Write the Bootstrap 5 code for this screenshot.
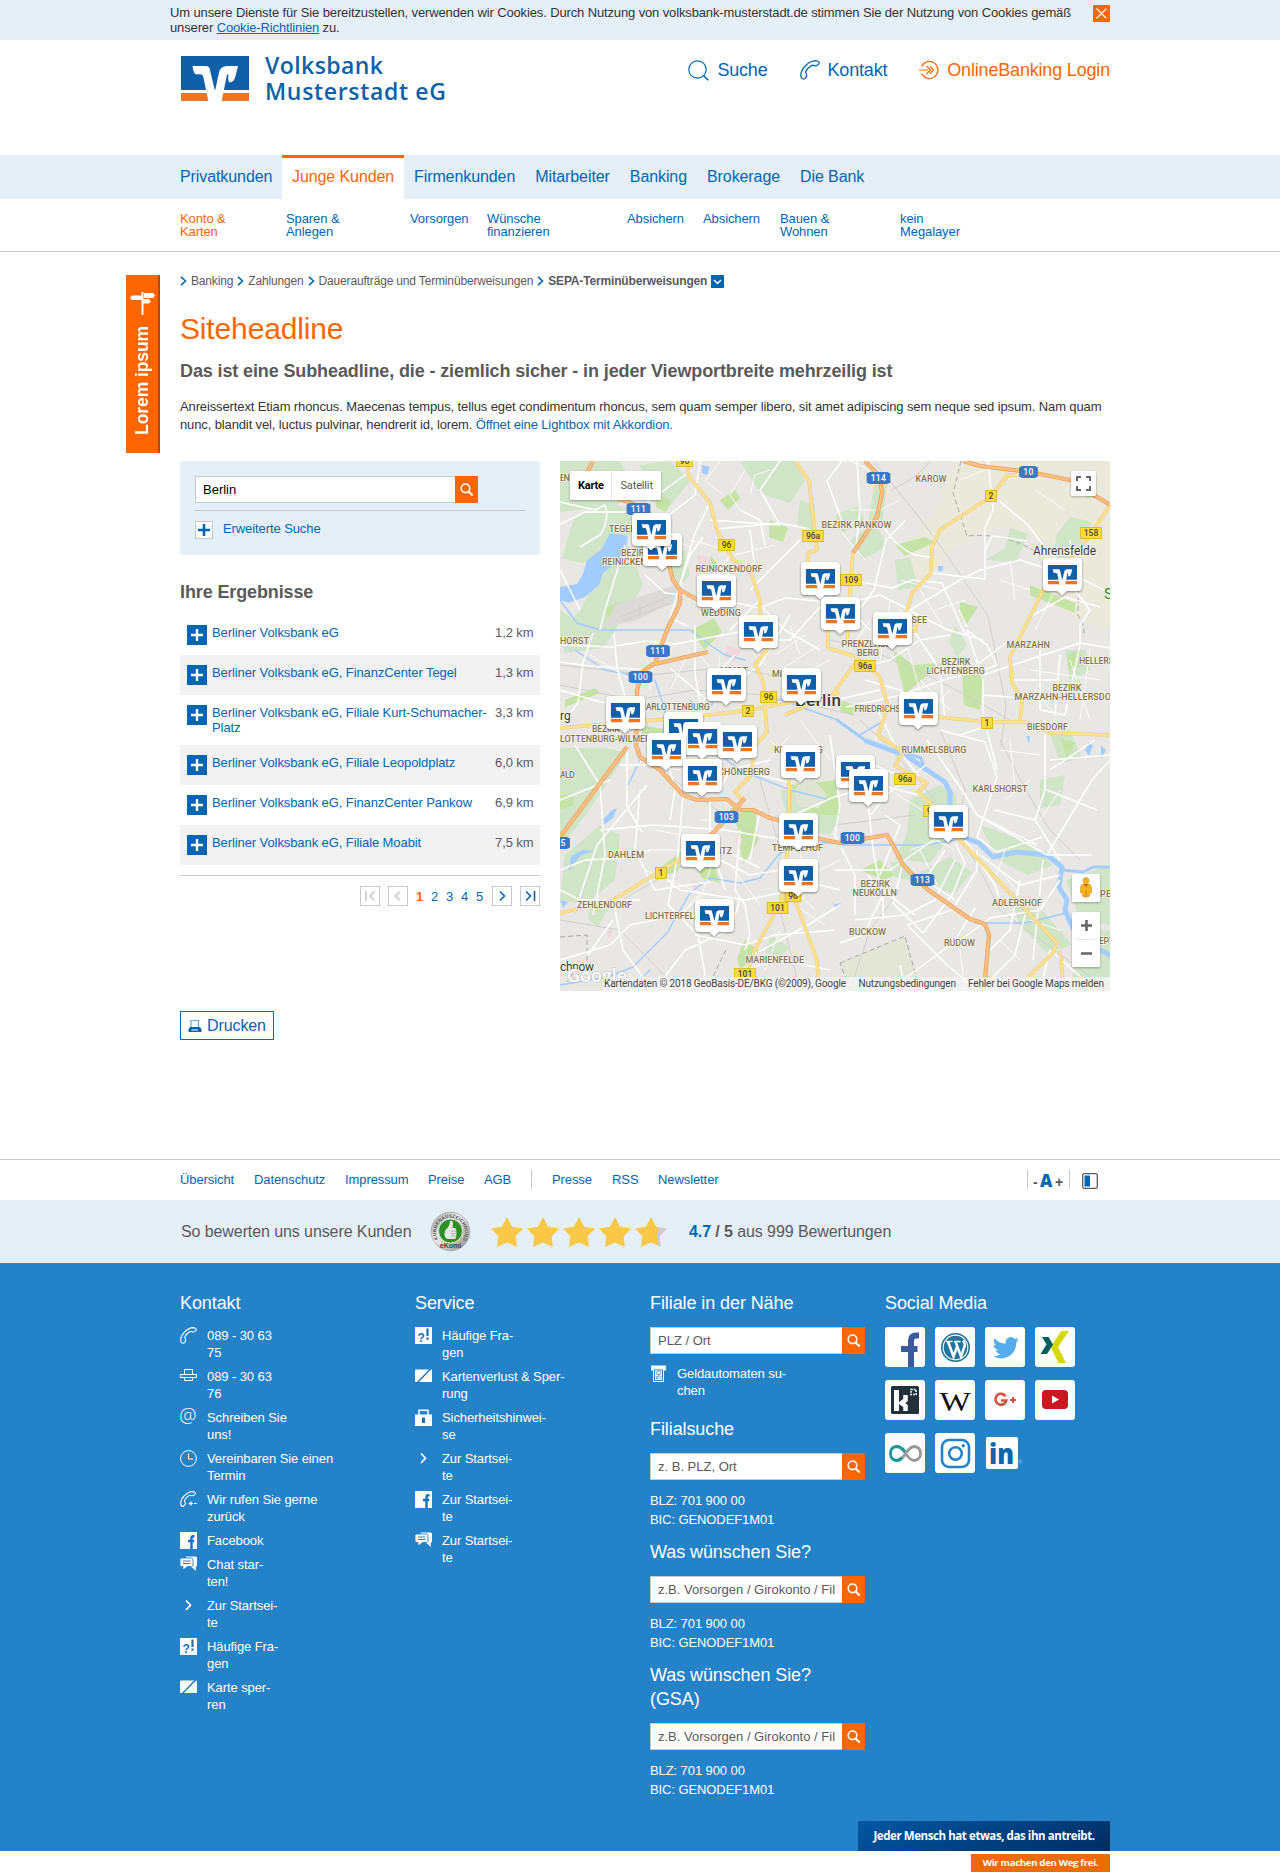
<!DOCTYPE html>
<html lang="de">
<head>
<meta charset="utf-8">
<meta name="viewport" content="width=device-width, initial-scale=1">
<title>Volksbank Musterstadt eG</title>
<link href="https://cdn.jsdelivr.net/npm/bootstrap@5.3.0/dist/css/bootstrap.min.css" rel="stylesheet">
<style>
:root{--vb:#0066b3;--or:#f60;--pale:#e4eff7;--line:#c8c8c8}
body{font-family:"Liberation Sans",Arial,sans-serif;font-size:13px;line-height:15px;letter-spacing:-.09px;color:#333;background:#fff;overflow-x:hidden}
a{color:var(--vb);text-decoration:none}
svg{display:block;flex:none;letter-spacing:0}
.wrap{width:940px;margin:0 auto;padding-left:10px}
.cookie{background:var(--pale);height:40px;padding-top:5px}
.cookie p{white-space:nowrap;letter-spacing:-.13px}
.close-x{width:17px;height:17px;background:var(--or)}
.site-head{height:115px}
.logo{margin:15px 0 0 1px}
.tools{font-size:18px;line-height:24px;padding-top:18px;letter-spacing:-.18px}
.mainnav{background:var(--pale);height:44px}
.mainnav .nav-link{font-size:16px;line-height:44px;padding:0 10px;color:var(--vb);white-space:nowrap}
.mainnav .nav-link.active{background:#fff;color:var(--or);border-top:3px solid var(--or);line-height:38px;height:44px;width:122px}
.subnav{height:53px;border-bottom:1px solid var(--line);padding-top:13px;line-height:13px}
.crumbs{font-size:12px;line-height:18px;color:#5a5a5a;padding-top:20px;letter-spacing:-.16px}
.headline{font-size:30px;line-height:36px;color:var(--or);margin:21px 0 0;font-weight:400;letter-spacing:-.15px}
.subline{font-size:18px;line-height:24px;color:#5a5a5a;font-weight:700;margin:12px 0 0;letter-spacing:-.12px}
.intro{line-height:18px;margin:15px 0 0;white-space:nowrap;letter-spacing:-.123px}
.sidetab{left:126px;top:275px;width:34px;height:178px;background:var(--or);border-right:2px solid #b94a00}
.sidetab span{writing-mode:vertical-rl;transform:rotate(180deg);color:#fff;font-weight:700;font-size:17.5px;line-height:20px}
.left-col{width:360px}
.searchbox{background:var(--pale);height:94px;padding:15px}
.field{height:27px}
.field .form-control{font-family:inherit;font-size:13px;line-height:15px;height:27px;border:1px solid var(--line);border-right:0;border-radius:0;padding:0 0 0 7px;color:#000;box-shadow:none;background:#fff}
.field .form-control::placeholder{color:#5a5a5a;opacity:1}
.field .btn{width:23px;height:27px;border-radius:0;background:var(--or);padding:0;border:0;flex:none}
.more{border-top:1px solid var(--line);margin-top:7px;padding-top:10px}
.boxed{width:18px;height:18px;border:1px solid var(--line);background:#fff}
.results{margin-top:11px}
.results li{padding:10px 7px;gap:5px;min-height:40px}
.results li:nth-child(even){background:#f2f2f2}
.plus{width:20px;height:20px;background:var(--vb);flex:none}
.km{color:#5a5a5a;width:38px;text-align:right;white-space:nowrap}
.pager{margin-top:10px;border-top:1px solid var(--line);padding-top:10px}
.pg{width:20px;height:20px;border:1px solid var(--line)}
.print{margin-top:20px;width:94px;height:29px;border:1px solid var(--vb);border-radius:0;font-size:16px;color:var(--vb);padding:0 0 0 7px;line-height:27px;gap:5px;letter-spacing:-.1px}
.map{width:550px;height:530px}
.map text{font-family:Roboto,sans-serif}
.metabar{margin-top:119px;border-top:1px solid var(--line);height:41px}
.metabar a{position:static}
.metabar .wrap{height:39px}
.vr-l{width:1px;height:19px;background:var(--line)}
.rating{background:var(--pale);height:63px;font-size:16px;color:#5a5a5a}
.foot{background:#2482c9;height:588px;color:#fff}
.foot h3{font-size:18px;line-height:24px;margin:0 0 12px;font-weight:400;white-space:nowrap}
.foot a{color:#fff}
.fcol{width:235px}
.flist li{line-height:17px;margin-bottom:7px;gap:10px}
.flist svg,.flist .ic{width:17px;height:17px}
.blz{line-height:19px;margin:11px 0}
.fsearch{width:215px}
.fsearch .form-control{padding-left:7px}
.social{display:grid;grid-template-columns:repeat(4,40px);gap:13px 10px}
.tile{width:40px;height:40px;background:#fff;border-radius:3px}
.slogan{width:252px;height:30px;background:linear-gradient(160deg,#0058a5,#002c60);font:700 11.5px/30px "Open Sans",sans-serif;letter-spacing:-.42px;text-align:center;color:#fff;white-space:nowrap}
.slogan2{width:139px;height:18px;margin-top:3px;background:#ee6a05;font:700 9.6px/18px "Open Sans",sans-serif;letter-spacing:-.3px;text-align:center;color:#fff;white-space:nowrap}
</style>
<script src="https://cdn.jsdelivr.net/npm/bootstrap@5.3.0/dist/js/bootstrap.bundle.min.js"></script>
</head>
<body class="position-relative">

<svg width="0" height="0" class="position-absolute" aria-hidden="true">
  <defs>
    <symbol id="vr" viewBox="0 0 68 45">
      <path fill="#fff" d="M0 0h68v45H0z"/>
      <path fill="#0f5fa9" d="M0 0h68v34H0z"/>
      <path fill="#ed7423" d="M0 37h68v8H0z"/>
      <path fill="#fff" d="M11.500 10H25.500Q28 10 28.600 12.500L34 35 38 16.500Q39.500 10 46 10H57L54.500 20Q53 26.500 48.500 26.500 46.500 25 47.500 18.500L46 18.500 40.500 46H27.600L22.300 21Q21.700 18.200 19 18.200H14.500Q12.500 17 11.500 10z"/>
    </symbol>
    <symbol id="lens" viewBox="0 0 23 27"><circle cx="10.500" cy="12.300" r="4.300" fill="none" stroke="#fff" stroke-width="1.600"/><path d="M13.500 15.500l4.200 4" stroke="#fff" stroke-width="2.200"/></symbol>
    <symbol id="phone" viewBox="0 0 20 20"><path fill="none" stroke="currentColor" stroke-width="1.300" stroke-linejoin="round" d="M.8 15.500C.8 9 8.500 1 15.500.7c1.300 0 3.500 1 3.700 2.200.1.900-.8 1.500-1.700 2.200-1 .8-1.900 1.200-3.300.5-1-.5-1.600-.7-2.800 0C9 7 6.700 9.500 5.800 11.400c-.5 1.100-.1 1.700.5 2.500.9 1.200.7 2-.1 3.100-.8 1-1.400 2.200-2.400 2.200C2 19.200.8 17.200.8 15.500z"/></symbol>
    <symbol id="fbox" viewBox="0 0 17 17"><path fill="#fff" d="M0 0h17v17H0z"/><path d="M14.500 4.200h-1.300q-1.700 0-1.700 1.800V17M8 9h6.200" fill="none" stroke="#1670bd" stroke-width="2.400"/></symbol>
    <symbol id="chat" viewBox="0 0 17 17"><path fill="#fff" d="M5.500.5h10q1.500 0 1.500 1.500v7q0 1.500-1.200 1.700V15l-3-3H12z"/><path fill="#fff" stroke="#2482c9" stroke-width=".9" d="M1.600 2h10q1.400 0 1.400 1.500V9q0 1.500-1.400 1.500H7.500L3 14v-3.500H1.600Q0 10.500 0 9V3.500Q0 2 1.600 2z"/><path stroke="#2482c9" d="M3 5h7.500M3 7.500h7.500"/></symbol>
    <symbol id="chev" viewBox="0 0 17 17"><path d="M6 3.500l4.500 4.700L6 13" fill="none" stroke="#fff" stroke-width="1.700"/></symbol>
    <symbol id="faq" viewBox="0 0 17 17"><path fill="#fff" d="M0 0h17v17H0z"/><text x="2.500" y="15" font-family="Liberation Sans" font-weight="700" font-size="12" fill="#1670bd">?</text><path stroke="#1670bd" stroke-width="2.200" d="M12.500 1.500v7.500M12.500 10.500v2.300"/></symbol>
    <symbol id="ccard" viewBox="0 0 17 17"><rect y="1.500" width="17" height="12.500" rx="1" fill="#fff"/><path d="M2 15L15.500 1" stroke="#1670bd" stroke-width="1.300"/></symbol>
    <symbol id="cr" viewBox="0 0 7 10"><path d="M1 .8l4.500 4.200L1 9.200" fill="none" stroke="#0066b3" stroke-width="1.600"/></symbol>
    <symbol id="star" viewBox="0 0 32 30"><path d="M16 0L21.200 9.800 32 11.500 24.600 19.400 26 30 16 25.500 6 30 7.400 19.400 0 11.500 10.800 9.800z"/></symbol>
    <linearGradient id="part"><stop offset=".72" stop-color="#f9c846"/><stop offset=".72" stop-color="#ccc"/></linearGradient>
  </defs>
</svg>

<div class="cookie">
  <div class="wrap ps-0 d-flex justify-content-between">
    <p class="m-0">Um unsere Dienste für Sie bereitzustellen, verwenden wir Cookies. Durch Nutzung von volksbank-musterstadt.de stimmen Sie der Nutzung von Cookies gemäß<br>unserer <a href="#" class="text-decoration-underline">Cookie-Richtlinien</a> zu.</p>
    <a href="#" class="close-x" aria-label="Schließen"><svg width="17" height="17"><path d="M3.500 3.500l10 10M13.500 3.500l-10 10" stroke="#fff" stroke-width="1.200"/></svg></a>
  </div>
</div>

<header class="wrap site-head d-flex justify-content-between align-items-start">
  <a href="#" class="logo"><svg width="270" height="56"><use href="#vr" y="1" width="68" height="45"/><g font-family="Open Sans, Noto Sans" font-weight="600" font-size="23" fill="#0f5fa9"><text x="84" y="19" textLength="118">Volksbank</text><text x="84" y="45" textLength="181">Musterstadt eG</text></g></svg></a>
  <nav class="tools d-flex">
    <a href="#" class="d-flex align-items-center me-4"><svg width="21" height="21" class="me-2"><circle cx="9.500" cy="9.500" r="8.700" fill="none" stroke="#0066b3" stroke-width="1.200"/><path d="M15.500 15.500l4.700 4.700" stroke="#0066b3" stroke-width="1.600"/></svg>Suche</a>
    <a href="#" class="d-flex align-items-center ms-2"><svg width="20" height="20" style="color:#0066b3" class="me-2"><use href="#phone"/></svg>Kontakt</a>
    <a href="#" class="d-flex align-items-center text-nowrap ms-4" style="color:#f60"><svg width="20" height="20" class="ms-2 me-2" fill="none" stroke="#f60" stroke-width="1.200"><path d="M2.800 6.200a8.500 8.500 0 1 1 0 7.600M0 10h9M7.500 6l4 4-4 4M11 6.500l3.500 3.500-3.500 3.500"/></svg>OnlineBanking Login</a>
  </nav>
</header>

<nav class="mainnav">
  <div class="wrap ps-0 nav flex-nowrap">
    <a class="nav-link" style="width:112px" href="#">Privatkunden</a><a class="nav-link active" href="#">Junge Kunden</a><a class="nav-link" href="#">Firmenkunden</a><a class="nav-link" href="#">Mitarbeiter</a><a class="nav-link" href="#">Banking</a><a class="nav-link" href="#">Brokerage</a><a class="nav-link" href="#">Die Bank</a>
  </div>
</nav>
<nav class="subnav">
  <div class="wrap d-flex">
    <a href="#" style="width:106px;color:#f60">Konto &amp;<br>Karten</a><a href="#" style="width:124px">Sparen &amp;<br>Anlegen</a><a href="#" style="width:77px">Vorsorgen</a><a href="#" style="width:140px">Wünsche<br>finanzieren</a><a href="#" style="width:76px">Absichern</a><a href="#" style="width:77px">Absichern</a><a href="#" style="width:120px">Bauen &amp;<br>Wohnen</a><a href="#">kein<br>Megalayer</a>
  </div>
</nav>

<div class="sidetab position-absolute d-flex flex-column align-items-center">
  <svg width="34" height="46"><path fill="#fff" d="M16.500 17h2v23h-2z"/><path fill="#fff" d="M7 20.500h10v4.500H7l-2-2.200zM19 18h9l2 2.500-2 2.500h-9zM17 24h7l2 2.200-2 2.300h-7z"/></svg>
  <span style="margin-top:5px">Lorem ipsum</span>
</div>

<main class="wrap">
  <div class="crumbs d-flex align-items-center text-nowrap">
    <svg width="7" height="10" class="me-1"><use href="#cr"/></svg>Banking
    <svg width="7" height="10" class="mx-1"><use href="#cr"/></svg>Zahlungen
    <svg width="7" height="10" class="mx-1"><use href="#cr"/></svg>Daueraufträge und Terminüberweisungen
    <svg width="7" height="10" class="mx-1"><use href="#cr"/></svg><b>SEPA-Terminüberweisungen</b>
    <svg width="13" height="13" class="ms-1"><path fill="#0066b3" d="M0 0h13v13H0z"/><path d="M3 5l3.500 3.500L10 5" fill="none" stroke="#fff" stroke-width="1.500"/></svg>
  </div>
  <h1 class="headline">Siteheadline</h1>
  <h2 class="subline">Das ist eine Subheadline, die - ziemlich sicher - in jeder Viewportbreite mehrzeilig ist</h2>
  <p class="intro">Anreissertext Etiam rhoncus. Maecenas tempus, tellus eget condimentum rhoncus, sem quam semper libero, sit amet adipiscing sem neque sed ipsum. Nam quam<br>nunc, blandit vel, luctus pulvinar, hendrerit id, lorem. <a href="#">Öffnet eine Lightbox mit Akkordion.</a></p>

  <div class="d-flex" style="margin-top:27px;gap:20px">
    <section class="left-col">
      <form class="searchbox">
        <div class="input-group field flex-nowrap" style="width:283px"><input class="form-control" value="Berlin" aria-label="Ort"><button type="button" class="btn" aria-label="Suchen"><svg width="23" height="27"><use href="#lens"/></svg></button></div>
        <div class="more d-flex"><span class="boxed"><svg width="16" height="16"><path d="M2 8h12M8 2v12" stroke="#0066b3" stroke-width="2.600"/></svg></span><a href="#" style="margin-left:10px">Erweiterte Suche</a></div>
      </form>
      <h2 class="subline" style="margin-top:25px">Ihre Ergebnisse</h2>
      <ul class="results list-unstyled mb-0" id="results"></ul>
      <div class="pager d-flex justify-content-end align-items-center">
        <a href="#" class="pg"><svg width="18" height="18" fill="none" stroke="#c8c8c8" stroke-width="1.600"><path d="M5 4v10M13.500 4.500L9 9l4.500 4.500"/></svg></a>
        <a href="#" class="pg" style="margin:0 8px"><svg width="18" height="18" fill="none" stroke="#c8c8c8" stroke-width="1.600"><path d="M11 4.500L6.500 9l4.500 4.500"/></svg></a>
        <b style="color:#f60;width:15px">1</b><a href="#" style="width:15px">2</a><a href="#" style="width:15px">3</a><a href="#" style="width:15px">4</a><a href="#" style="width:16px">5</a>
        <a href="#" class="pg"><svg width="18" height="18" fill="none" stroke="#0066b3" stroke-width="1.600"><path d="M7 4.500L11.500 9 7 13.500"/></svg></a>
        <a href="#" class="pg" style="margin-left:8px"><svg width="18" height="18" fill="none" stroke="#0066b3" stroke-width="1.600"><path d="M5 4.500L9.500 9 5 13.500M13.500 4v10"/></svg></a>
      </div>
    </section>

    <svg class="map" id="map" viewBox="560 461 550 530">
      <path fill="#e8e7e4" d="M560 461h550v530H560z"/>
      <path fill="#ebe8dc" d="M955 461h155v170l-50-20-20-70-40-15-50 25-30 40-15-40 30-40z"/>
      <!-- parks and woods -->
      <g fill="#d0e4c8">
        <path d="M560 461h60l15 25-18 20-57 6zM575 515l35-10 40 5 12 20-35 5-20 20-25 8-20-5zM598 575l30-30 15 40-10 18-30 45-38 5-5-22 20-20zM640 465l30-4 20 20-20 25-20-5zM560 610l15 10 5 20h-20zM665 560l20-10 5 25-15 15zM740 461l55 0 10 20-15 22-30-10zM800 500l15 5-3 25-15-5zM560 748l45 0 22 5-40 60-27 35zM565 855l35-30 20 10-5 45-30 25-25-5zM590 900l20 5-12 22-10-8zM850 540l25-18 12 25-25 12zM895 560l15-2 8 28-20 5zM875 480l12 5-5 40-15 5zM985 560l20-12 5-20 18 6-12 28zM1056 535l14-18 22 5-22 40-16 0zM910 800l30-15 15 8 5 30-30 40-35-4 12-25zM890 862l15 0 15 20-25-5zM920 872l30-15 22 15-18 22-22-8zM980 825l45 15 28 25-25 10-30-15zM1040 780l25-5-5 30-20 3zM1050 735l20-5 12 28-22 5zM1066 880l44-15v60l-30-5zM1012 905l30 5 30 35-25 8-25-25zM1080 930h30v61h-40zM780 790l50 0 10 25-10 20-40-8zM770 935l20 12-10 10-15-5zM1065 650l20 0 5 20-20 12zM835 515l25-10 5 18-25 10zM955 625l12 20-10 12-8-15z"/>
      </g>
      <path fill="#e3e6d6" d="M840 963l65-27 15 55h-70z" stroke="#999" stroke-dasharray="5 3" stroke-width=".8"/>
      <g fill="#c5e3a4">
        <path d="M692 630l22-12 8 14-18 18zM640 545l10 5-5 10-8-5zM960 602l18 5-12 18-6-8zM962 675h22l-4 35-16-5zM893 650l20 15 30-2-20 16-18 15zM895 545l30-8 10 5-30 14zM1030 585l45 18v10l-45-18zM735 815l20-8 3 35-15 22zM565 700l30-12 5 5-35 14zM560 795l12 0 2 10-14 5zM662 866l20-15-4 20-14 5zM695 863l20 5 5 15-18-5zM790 785l45-5 5 35-30 0zM640 725l30 5-5 15-20-3zM1080 480l15 10-5 8-12-5zM720 500l15-10 5 8-12 12zM745 940l15 12-20 18-3-12zM860 870l20-10 15 15-12 5zM1068 655l12-5 3 15-15 5zM655 490l16 12-5 10-10-5zM770 520l18 8-5 14-14-5zM603 610l15-8 8 14-15 4zM710 555l8 10-8 10zM1060 738l15 5-8 15zM840 700l15 5-3 10-12-4zM975 985l15-10v16h-15z"/>
      </g>
      <path fill="#f1d8dc" d="M697 555l12 2 4 12-12 2zM727 645l14 5-6 12-10-5zM692 880l8 3-6 10zM605 928l8 2-4 10zM735 838l8 0-4 12z"/>
      <path fill="#dcdad6" d="M615 605l60-20 15 8-55 28-30 5z"/>
      <path fill="#dfe3d3" d="M795 790q5-12 20-8l12 12-8 14-22-2z"/>
      <!-- rails -->
      <g fill="none" stroke="#cfcfcd" stroke-width="1">
        <path d="M873 461q25 30 45 55t70 100l18 90-5 40M560 685q50 10 75 15l60-10 70 5 90 20M560 665l90 10 80-8 60 12M890 491q30-15 40-30M860 720q90 80 140 190l110 81M835 825l80-10M1000 740q30 60 50 90l30 30M940 730l25 60-10 50M760 780l20 70 0 60 20 81M613 905l70-40 60-60M640 700l20 70 100 70M830 640q60 10 180 80M560 920l60 10 60 61M850 990l20-60 30-40"/>
        <path d="M620 617l60-25M622 621l62-22M640 604v15"/>
      </g>
      <path fill="none" stroke="#999" stroke-width=".8" stroke-dasharray="5 3" d="M961 461l-8 32 14 43q40-4 72 18M1078 590v25l6 12v10M560 937l27-2v25l-12 10-8 12M726 950l-20 41"/>
      <!-- water -->
      <g fill="#a3ccff">
        <path d="M610 533l18 3-3 19-22 18-4 12-14 12-16 6-9-3v-13l17-3 6-10 4-14 14-10zM617 808l-4 10-9 7-1-5 8-9zM595 851l-14 4-12 16 2-15 12-6zM702 465l8 2-3 8-5-2zM1026 736l4 0-1 8zM1089 742l4 4-4 10-4-6zM1101 745l5 5-5 9zM560 900l8 2-5 6zM938 566h5v5h-5zM833 905l8-2-4 6z"/>
      </g>
      <g fill="none" stroke="#a3ccff" stroke-linejoin="round" stroke-linecap="round">
        <path stroke-width="5" d="M866 741l41 15 20 14 18 12 5 10v12M965 838l14 5 14 14 23-5 31 3 15 12-3 20 8 13-2 10 5 12 4 8M1100 950l10 5"/>
        <path stroke-width="3" d="M837 720l29 21M903 752l18 6 4 12M1063 870l20 2 10-5 17 0"/>
        <path stroke-width="1.500" d="M560 600l17 23 23 7h90l20 15 15 10 20 5M575 650l30 20 25 5 10 10M655 680l10 30-2 30M690 700l10 10 12-5 2-15M763 700l20 0 20 8 35 12M840 845l45 0 40 0 30-5M633 967l-25 10-48 8M633 967l34-34 23-40 20-15 30 5 20-5 20-25 40-10 20 0M975 923l50 0 42-10M640 760l-12 25M700 740l40 30 50 20 40 10M860 735l20-12M630 990l20-20"/>
      </g>
      <!-- streets -->
      <g fill="none" stroke="#fff" stroke-width="1.500" stroke-linejoin="round">
        <path d="M560 502l35 8 10-5q5 15-5 30l-20 12M560 524l25-12 45 0M637 510l55-40M650 540l15-22 30-23 5-34M710 503l-15 30-25 85 18 8M645 575l20 18 20 2M680 585l10-30 13-18M710 520l70 5-20-35 20-29M717 529l63-6 30 6M730 555l-12 20-20 12M697 600l40 3 23 5 25-10 55 5M760 600l-30 30M760 605l25 25 35 20M770 640l20 0 50-55M600 630l5-20 20-65M560 645l50 2 35-6 30 3 80-15M560 662l30 4 60 4M560 690l40 12 50 5M593 633l-10 30-5 40-15 20M614 633l3 35 10 35M695 625l0 50 8 40M670 668l35 30-10 20M735 655l-20 20M790 615l-30 50-15 10M800 540l-50 50M750 530l5 40M740 510l20 10 5 25M560 570l20 40M857 461l3 50-5 45M880 520q12 25 35 35l15 2M842 461l-15 20 15 40M860 520l-20 8M906 520l-20 20-12 50-15 20M852 580l40 8 20-8 30 3 20 45 5 8M840 605l40-10 30 15 50-30 20-10 40-10 25 8M932 573l25 3 28 3 0-28 7-15 35 5M985 550l0-22 8-18-5-49M998 500l30 25 15 20M1045 548l35 30 30 15M1070 540l5 50 15 20-10 15 0 18M1030 617l35-20 35 10M967 627l-8-17M967 630l20 15 10 20-14 5-40 10-42 15-55 12M983 640l-35-10-40-20M967 630l16 50 0 40M983 675l60-20 37-12 30 5M1040 650l0 60 25 5M1060 655l-5 60M1080 645l-15 70M983 695l65 5M945 720l-5-50-40-60M1012 680l48 0M870 665l20-5 30-20 30-5M830 620l30 0 10 10M865 680l35 10 30 30M880 690l-45 10M875 705l20 40 30 40M1010 640l-40 30"/>
        <path d="M575 745l25 40 5 70-12 60M560 800l50-20M620 765l25 0 35-10M647 785l-50 60-20 60M600 830l55-5 70 5 60 10M640 790l-5 60 20 40 55-8M683 795l-5 60-10 50 30 30 10 56M710 800l0 40 15 50M690 845l60 30 60-10M655 870l25 20 65 10 75-15 20 5M700 838l60 30M740 830l-5 60 10 15 5 30-5 15M760 810l-10 50M627 747l0 60 15 25M560 870l25-10 45-2 20-8M560 890l20 10 60 0M560 960l50-15 20-20 50-10 20-20M613 900l10 50 30 41M613 920l-25 35M655 990l30-40 45-20 10-30M695 935l50 10 30-10 60-5M753 955l55-30 32-20M740 970l40-10 50 10M665 750l10 40-5 30M770 760l-40 10-10 20M752 773l40 10M830 735l10 70-5 30 20 40 0 40M789 817l45-20 45-12 40 10M868 800l5 50 10 50 0 20M835 870l55 0 55-38M885 815l15 10-20 50M903 863l-10 40 30 30 30-40 12-30-10-20M855 920l50-5 30-15 20-40M868 875l15 20-20 40-23 8M870 880l45 35M907 925l45-15 25-40 0-20M907 925l40 40 30 25M950 945l-40 30-20 10M950 948l40-30 50-8 20-30M950 948l25-40M965 840l30 45 5 15M940 730l45 12 12 35-20 60 20 15 45-15M927 740l35 50 15 25 60 30M1045 720l0 70-10 30 25 40M1047 790l50 20M1050 760l60-5M1035 820l-40-10M1050 770l45-30M987 730l10 40M990 725l-30 10M977 815l70 40 45-75 18-20M1047 855l45 0M1060 875l-40 10-40-30M1043 860l-10 100M1020 880l-10 50-20 20M985 985l30-30 10-40M1040 990l10-40 40 35M905 990l-5-25M926 765l-40 30-15 20M861 760l50 20M945 850l-20 30 30 20"/>
        <path stroke-width="1" opacity=".85" d="M720 461l-15 20 20 15M745 470l-15 25 10 15M775 545l-40 10M770 470l-15 5-5 20M690 540l30 8M665 535l25 12M790 625l10 30M805 635l-30 20M745 625l20 40M820 645l-40 25M830 660l-40 20M700 655l30 40M690 650l-20 40M720 655l-5 45M655 640l-5 50M590 655l50 30M800 720l30 40M770 740l40 40M790 735l-25 30M665 750l-40 20M650 765l30 5M690 790l30-15M700 820l40 0M655 830l25 5M650 850l35 0M645 870l60 25M720 840l-20 60M730 865l30 40M805 830l-10 60 20 20M820 840l-5 50M840 860l-40 20M795 905l30 20M780 930l-15 40M870 620l-20 30M890 600l-10 60M920 590l25 40M900 580l40 10M935 610l30-10M1000 580l30 10M1010 560l5 40M1055 590l-20 40M1030 670l70 10M1070 660l20 60M1090 650l-10 70M1035 690l20 25M920 680l30 30M950 690l-20 20M905 640l15 50M885 720l-10 20M890 790l40 25M910 850l30-10M920 850l20 40M935 840l20 10M1000 870l20 25M1005 850l-10 30M1030 920l30 10M1000 940l20 20M960 950l5 40M1000 750l40 5M1010 740l5 50M1060 790l-20 30M1030 780l-25 20M840 530l25 30M850 510l30 0M900 500l-20 10M870 470l-20-9M960 480l25-10M1035 490l30 20"/>
      </g>
      <!-- yellow main roads -->
      <g fill="none" stroke-linejoin="round">
        <path id="y1" d="M688 461v14l22 28 7 27 16 30 17 10 10 30v30l7 20-12 14 8 18 4 50-14 16-1 26-17 18 8 8M795 461l14 20 8 69-9 3v15M853 553l-3 37-3 55M1017 475h-9l-18 22-50 33-8 17-1 26-19 20-5 18v20l8 0 3-10M828 600l0 48 29 9 23 20 8 30-10 28 25 17-8 14 32 17-9 9 12 11 30 37 97 103-4 10-28 27M857 660l-24 34-48 21M560 728l73-6 77-7 40-5 90-17M938 717l49 5h40l23 11 60 2M1110 505l-22 33-45 52-13 27-20 40 2 26 10 17-2 20M789 780v37l-2 36-5 47-29 53-10 38M795 900l22 60 2 31M682 858l-69 42-53 13M1060 950l4 41" stroke="#eecb70" stroke-width="3.600"/>
        <path d="M688 461v14l22 28 7 27 16 30 17 10 10 30v30l7 20-12 14 8 18 4 50-14 16-1 26-17 18 8 8M795 461l14 20 8 69-9 3v15M853 553l-3 37-3 55M1017 475h-9l-18 22-50 33-8 17-1 26-19 20-5 18v20l8 0 3-10M828 600l0 48 29 9 23 20 8 30-10 28 25 17-8 14 32 17-9 9 12 11 30 37 97 103-4 10-28 27M857 660l-24 34-48 21M560 728l73-6 77-7 40-5 90-17M938 717l49 5h40l23 11 60 2M1110 505l-22 33-45 52-13 27-20 40 2 26 10 17-2 20M789 780v37l-2 36-5 47-29 53-10 38M795 900l22 60 2 31M682 858l-69 42-53 13M1060 950l4 41" stroke="#fde293" stroke-width="2.400"/>
      </g>
      <!-- motorways -->
      <g fill="none" stroke-linejoin="round">
        <path stroke="#e8a058" stroke-width="4.200" d="M593 461l-6 12 18 20 30 12 30 45 8 30 7 10v13l-13 27-12 33-13 9-5 18v27l-1 28 4 12 20 13 23 25 14 5 30-1 13 11h13l17 8 20 5 30 16 20 4 23-4 24-4 6 10 10 20 24 24 43 30 15 5 4 11-4 44-2 14M680 590l20 11M655 664l53-12M627 747l-67 90M745 798l-32 35-31 25M865 461l15 16 2 16-5 24-24 36M963 461l17 5 50 6 40 8 40 25"/>
        <path stroke="#fdc084" stroke-width="2.600" d="M593 461l-6 12 18 20 30 12 30 45 8 30 7 10v13l-13 27-12 33-13 9-5 18v27l-1 28 4 12 20 13 23 25 14 5 30-1 13 11h13l17 8 20 5 30 16 20 4 23-4 24-4 6 10 10 20 24 24 43 30 15 5 4 11-4 44-2 14M680 590l20 11M655 664l53-12M627 747l-67 90M745 798l-32 35-31 25M865 461l15 16 2 16-5 24-24 36M963 461l17 5 50 6 40 8 40 25"/>
      </g>
      <g id="shields" font-size="8.500" font-weight="500" text-anchor="middle"></g>
      <g id="labels" font-size="9" fill="#857550" font-weight="500" stroke="#f3f1ea" stroke-width="1.600" paint-order="stroke" stroke-linejoin="round"></g>
      <g fill="#3b3b33" stroke="#f5f3ee" stroke-width="2" paint-order="stroke">
        <text x="795" y="706" font-size="17" font-weight="500" textLength="46">Berlin</text>
        <text x="1033" y="555" font-size="12" textLength="63">Ahrensfelde</text>
        <text x="560" y="971" font-size="12" textLength="34">chnow</text>
        <text x="560" y="720" font-size="12">rg</text>
        <text x="1104" y="599" font-size="15" fill="#278a1e">S</text>
      </g>
      <g id="pins"></g>
      <!-- map controls -->
      <path fill="#f5f5f5" fill-opacity=".8" d="M603 977h507v14H603z"/>
      <text x="567" y="982" font-size="18" font-weight="600" fill="#fff" stroke="#999" stroke-opacity=".55" stroke-width="1.200" paint-order="stroke" textLength="60" style="font-family:'Open Sans'">Google</text>
      <g font-size="10" fill="#444"><text x="604" y="987" textLength="242">Kartendaten © 2018 GeoBasis-DE/BKG (©2009), Google</text><text x="858.500" y="987" textLength="97.500">Nutzungsbedingungen</text><text x="968" y="987" textLength="136">Fehler bei Google Maps melden</text></g>
      <g style="filter:drop-shadow(0 1px 1px rgba(0,0,0,.3))" fill="#fff"><rect x="570" y="471" width="91" height="29" rx="1.500"/><rect x="1071" y="471" width="25" height="25" rx="1.500"/><rect x="1072" y="874" width="28" height="28" rx="1.500"/><rect x="1072" y="912" width="28" height="55" rx="1.500"/></g>
      <path stroke="#e6e6e6" d="M611.500 471v29M1076 939.500h19"/>
      <text x="578" y="489" font-size="11" font-weight="700" textLength="26">Karte</text><text x="620.500" y="489" font-size="11" fill="#565656" textLength="32.500">Satellit</text>
      <path fill="none" stroke="#666" stroke-width="2" d="M1077 481v-4h4M1086 477h4v4M1090 486v4h-4M1081 490h-4v-4"/>
      <path stroke="#666" stroke-width="2.600" d="M1081 925.500h11M1086.500 920v11M1081 953.500h11"/>
      <path fill="#f6b21b" stroke="#c7851a" stroke-width=".5" d="M1082.500 884h7l2 3v6h-2v3h-1v1h-5v-1h-1v-3h-2v-6z"/><circle cx="1086" cy="880.500" r="3" fill="#f6b21b" stroke="#c7851a" stroke-width=".5"/><path stroke="#c7851a" d="M1086 890v7"/><path fill="#e0561d" d="M1083.500 884h5l-2.500 3z"/>
    </svg>
  </div>

  <a href="#" class="print btn d-flex align-items-center"><svg width="14" height="14"><path fill="none" stroke="#6aa5d3" stroke-width="1.200" d="M3 9V1.500h7.500V9"/><path fill="#0066b3" d="M2 8h10l1.500 2.500V13H.5v-2.500z"/><path stroke="#fff" d="M3.500 11h6.500"/></svg>Drucken</a>
</main>

<div class="metabar">
  <div class="wrap d-flex align-items-center">
    <a href="#" style="width:74px">Übersicht</a><a href="#" style="width:91px">Datenschutz</a><a href="#" style="width:83px">Impressum</a><a href="#" style="width:56px">Preise</a><a href="#" style="width:47px">AGB</a><span class="vr-l" style="margin-right:20px"></span><a href="#" style="width:60px">Presse</a><a href="#" style="width:46px">RSS</a><a href="#">Newsletter</a>
    <span class="vr-l ms-auto"></span><b class="d-flex align-items-baseline" style="margin:3px 6px 0 5px;color:#5a5a5a;width:30px;justify-content:space-between;font-size:14px">-<a href="#" style="font:800 17px/20px 'Open Sans'">A</a><span>+</span></b><span class="vr-l"></span>
    <svg width="16" height="16" style="margin:2px 12px 0"><rect x=".7" y=".7" width="14.600" height="14.600" rx="1.500" fill="#fff" stroke="#5a5a5a" stroke-width="1.300"/><path fill="#0066b3" d="M2.500 2.500H8v11H2.500z"/></svg>
  </div>
</div>

<div class="rating">
  <div class="wrap d-flex align-items-center h-100">
    <span style="width:250px;padding-left:1px" class="text-nowrap">So bewerten uns unsere Kunden</span>
    <svg width="41" height="41" viewBox="0 0 41 41" style="margin-right:20px">
      <defs><linearGradient id="sil" x2="1" y2="1"><stop stop-color="#999"/><stop offset=".4" stop-color="#eee"/><stop offset="1" stop-color="#8a8a8a"/></linearGradient><path id="arc" d="M8 28A14.300 14.300 0 1 1 33 28"/></defs>
      <circle cx="20.500" cy="20.500" r="19.300" fill="url(#sil)" stroke="#999" stroke-width=".6"/>
      <circle cx="20.500" cy="20" r="12" fill="#2f8f22" stroke="#ddd"/>
      <path fill="#e6e6e6" d="M20 10q3-1 3 3l-.5 4h3q2 4 0 11h-8q-3-1-3-5 0-4 3-6 2.500-3 2.500-7z"/><path d="M21 20h5M21 22.500h5M21 25h4.500" stroke="#999" stroke-width=".7"/>
      <text font-family="Liberation Sans" font-size="4.800" font-weight="700" fill="#555"><textPath href="#arc" textLength="60">KUNDENAUSZEICHNUNG</textPath></text>
      <text x="20.500" y="37" font-family="Liberation Sans" font-size="7" font-weight="700" text-anchor="middle" fill="#444">eKomi</text>
    </svg>
    <div class="d-flex" style="gap:4px;width:177px">
      <svg width="32" height="30" fill="#f9c846"><use href="#star"/></svg><svg width="32" height="30" fill="#f9c846"><use href="#star"/></svg><svg width="32" height="30" fill="#f9c846"><use href="#star"/></svg><svg width="32" height="30" fill="#f9c846"><use href="#star"/></svg><svg width="32" height="30" fill="url(#part)"><use href="#star"/></svg>
    </div>
    <span class="text-nowrap" style="margin-left:21px"><b style="color:#0066b3">4.7</b> <b>/ 5</b> aus 999 Bewertungen</span>
  </div>
</div>

<footer class="foot">
  <div class="wrap h-100 d-flex flex-column">
    <div class="d-flex" style="padding-top:28px">
      <div class="fcol"><h3>Kontakt</h3>
        <ul class="flist list-unstyled m-0">
          <li class="d-flex"><svg><use href="#phone"/></svg><a href="#">089 - 30 63<br>75</a></li>
          <li class="d-flex"><svg fill="none" stroke="#fff"><path d="M4.500 6V1.500h8V6M.5 9.500v-3h16v3zM4.500 10v2.500h8V10"/></svg><a href="#">089 - 30 63<br>76</a></li>
          <li class="d-flex"><svg style="overflow:visible"><text x="-.7" y="13.500" font-family="Open Sans" font-weight="300" font-size="19.500" fill="#fff">@</text></svg><a href="#">Schreiben Sie<br>uns!</a></li>
          <li class="d-flex"><svg fill="none" stroke="#fff"><circle cx="8.500" cy="8.500" r="7.900"/><path d="M8.500 3.500v5.500h4.500"/></svg><a href="#">Vereinbaren Sie einen<br>Termin</a></li>
          <li class="d-flex"><svg><use href="#phone" width="16" height="16"/><path d="M10 12.500h7" stroke="#fff" stroke-dasharray="3 1"/><path fill="#fff" d="M8.500 12.500l3-2.500v5z"/></svg><a href="#">Wir rufen Sie gerne<br>zurück</a></li>
          <li class="d-flex"><svg><use href="#fbox"/></svg><a href="#">Facebook</a></li>
          <li class="d-flex"><svg><use href="#chat"/></svg><a href="#">Chat star-<br>ten!</a></li>
          <li class="d-flex"><svg><use href="#chev"/></svg><a href="#">Zur Startsei-<br>te</a></li>
          <li class="d-flex"><svg><use href="#faq"/></svg><a href="#">Häufige Fra-<br>gen</a></li>
          <li class="d-flex"><svg><use href="#ccard"/></svg><a href="#">Karte sper-<br>ren</a></li>
        </ul>
      </div>
      <div class="fcol"><h3>Service</h3>
        <ul class="flist list-unstyled m-0">
          <li class="d-flex"><svg><use href="#faq"/></svg><a href="#">Häufige Fra-<br>gen</a></li>
          <li class="d-flex"><svg><use href="#ccard"/></svg><a href="#">Kartenverlust &amp; Sper-<br>rung</a></li>
          <li class="d-flex"><svg><path d="M4 7V1.200h9V7" fill="none" stroke="#fff" stroke-width="1.500"/><path fill="#fff" d="M0 5.500h17V17H0z"/><path stroke="#1670bd" stroke-width="3" d="M8.500 8.500v5.500"/></svg><a href="#">Sicherheitshinwei-<br>se</a></li>
          <li class="d-flex"><svg><use href="#chev"/></svg><a href="#">Zur Startsei-<br>te</a></li>
          <li class="d-flex"><svg><use href="#fbox"/></svg><a href="#">Zur Startsei-<br>te</a></li>
          <li class="d-flex"><svg><use href="#chat"/></svg><a href="#">Zur Startsei-<br>te</a></li>
        </ul>
      </div>
      <div class="fcol"><h3>Filiale in der Nähe</h3>
        <div class="input-group field fsearch flex-nowrap"><input class="form-control" placeholder="PLZ / Ort"><button class="btn" aria-label="Suchen"><svg width="23" height="27"><use href="#lens"/></svg></button></div>
        <ul class="flist list-unstyled" style="margin:11px 0 18px"><li class="d-flex mb-0"><svg><path fill="#fff" d="M1 .5h15v5H1z"/><path fill="#fff" d="M3 4h11v13H3z"/><rect x="4.500" y="5" width="8" height="10.500" fill="none" stroke="#2482c9"/><text transform="translate(11.300 14.300) rotate(-90)" font-size="7.500" fill="#1670bd">50</text></svg><a href="#">Geldautomaten su-<br>chen</a></li></ul>
        <h3>Filialsuche</h3>
        <div class="input-group field fsearch flex-nowrap"><input class="form-control" placeholder="z. B. PLZ, Ort"><button class="btn" aria-label="Suchen"><svg width="23" height="27"><use href="#lens"/></svg></button></div>
        <p class="blz">BLZ: 701 900 00<br>BIC: GENODEF1M01</p>
        <h3>Was wünschen Sie?</h3>
        <div class="input-group field fsearch flex-nowrap"><input class="form-control" placeholder="z.B. Vorsorgen / Girokonto / Fil"><button class="btn" aria-label="Suchen"><svg width="23" height="27"><use href="#lens"/></svg></button></div>
        <p class="blz">BLZ: 701 900 00<br>BIC: GENODEF1M01</p>
        <h3>Was wünschen Sie?<br>(GSA)</h3>
        <div class="input-group field fsearch flex-nowrap"><input class="form-control" placeholder="z.B. Vorsorgen / Girokonto / Fil"><button class="btn" aria-label="Suchen"><svg width="23" height="27"><use href="#lens"/></svg></button></div>
        <p class="blz">BLZ: 701 900 00<br>BIC: GENODEF1M01</p>
      </div>
      <div><h3>Social Media</h3>
        <div class="social">
          <a href="#" class="tile" aria-label="Facebook"><svg width="40" height="40"><path d="M34 8.600h-3q-5 0-5 5.500V40M16 22h16.500" fill="none" stroke="#3a5a9b" stroke-width="6"/></svg></a>
          <a href="#" class="tile" aria-label="WordPress"><svg width="40" height="40"><circle cx="20.500" cy="20.500" r="13.700" fill="#fff" stroke="#21759b" stroke-width="1.600"/><circle cx="20.500" cy="20.500" r="11.800" fill="#21759b"/><path d="M11 14.500h6.500M19 14.500h6.500" stroke="#fff" stroke-width="1.500"/><path d="M13 14.500l5.500 15 4-11M20.500 14.500l5.500 15 3.500-10q1-3-1.500-6" fill="none" stroke="#fff" stroke-width="2.500"/></svg></a>
          <a href="#" class="tile" aria-label="Twitter"><svg width="40" height="40" viewBox="0 0 40 40"><path fill="#55acee" transform="translate(7.800 7.800) scale(1.090)" d="M23.950 4.570a10 10 0 0 1-2.820.77 4.960 4.960 0 0 0 2.160-2.720c-.95.550-2 .95-3.120 1.180a4.920 4.920 0 0 0-8.390 4.480C7.690 8.100 4.070 6.130 1.640 3.160a4.820 4.820 0 0 0-.67 2.470c0 1.710.87 3.210 2.190 4.100a4.900 4.900 0 0 1-2.230-.62v.06a4.920 4.920 0 0 0 3.950 4.830 5 5 0 0 1-2.210.08 4.940 4.940 0 0 0 4.600 3.420A9.870 9.870 0 0 1 0 19.540a13.990 13.990 0 0 0 7.550 2.210c9.050 0 14-7.500 14-13.980 0-.21 0-.42-.02-.63A9.940 9.940 0 0 0 24 4.590z"/></svg></a>
          <a href="#" class="tile" aria-label="Xing"><svg width="40" height="40"><path fill="#d4da00" d="M26.500 4H34L23 20l8 16h-7.500L15.500 20z"/><path fill="#005f5c" d="M7 10h6.500l4.500 7.500-6 9.500H5.500l6-9.500z"/></svg></a>
          <a href="#" class="tile" aria-label="kununu"><svg width="40" height="40"><rect x="6" y="6" width="28" height="28" rx="1.500" fill="#23303a"/><path d="M11.500 10v21" stroke="#fff" stroke-width="5"/><path d="M20.500 15v5l-4 3 4 3v5" fill="none" stroke="#fff" stroke-width="4.500"/><path d="M26 9.500h5v5h-5z" fill="none" stroke="#fff" stroke-width="1.500" stroke-dasharray="1.800 1"/></svg></a>
          <a href="#" class="tile" aria-label="Wikipedia"><svg width="40" height="40"><text transform="translate(4.500 31) scale(1.230 1)" font-family="Liberation Serif" font-size="27" fill="#111">W</text></svg></a>
          <a href="#" class="tile" aria-label="Google Plus"><svg width="40" height="40"><path d="M20.500 16.200a5.500 5.500 0 1 0 .8 4.300H16" fill="none" stroke="#dc4e41" stroke-width="2.700"/><path d="M25 20h6M28 17v6" stroke="#dc4e41" stroke-width="2"/></svg></a>
          <a href="#" class="tile" aria-label="YouTube"><svg width="40" height="40"><rect x="7" y="10" width="26" height="19" rx="4" fill="#c9181e"/><path fill="#fff" d="M17 15.500l7 4-7 4z"/></svg></a>
          <a href="#" class="tile" aria-label="Infinity"><svg width="40" height="40" fill="none" stroke-width="2.800"><path stroke="#999" d="M13 27.500c6 0 9-14 16-14q6.500.5 6.500 7t-6.500 7c-7 0-10-14-17-14"/><path stroke="#1a969f" d="M20 18.500q-4-5-8.500-5-6 .5-6 7t6 7q3 0 5.500-3"/></svg></a>
          <a href="#" class="tile" aria-label="Instagram"><svg width="40" height="40" fill="none" stroke="#2482c9"><rect x="7" y="7" width="27" height="27" rx="7" stroke-width="2.600"/><circle cx="20.500" cy="20.500" r="6.300" stroke-width="2.600"/><circle cx="28.300" cy="12.800" r="1.700" fill="#2482c9" stroke="none"/></svg></a>
          <a href="#" aria-label="LinkedIn"><svg width="44" height="40"><rect x="1" y="4" width="32" height="32" rx="2" fill="#fff"/><text x="4" y="31" font-family="Open Sans" font-weight="800" font-size="28" fill="#0a66a8" textLength="25" lengthAdjust="spacingAndGlyphs">in</text><text x="33" y="31" font-size="6" fill="#9cc6e8">®</text></svg></a>
        </div>
      </div>
    </div>
    <div class="slogan mt-auto align-self-end">Jeder Mensch hat etwas, das ihn antreibt.</div>
  </div>
</footer>
<div class="wrap d-flex justify-content-end" style="height:22px"><div class="slogan2">Wir machen den Weg frei.</div></div>

<script>
// Result list
document.getElementById('results').innerHTML = [
  ['Berliner Volksbank eG','1,2'],['Berliner Volksbank eG, FinanzCenter Tegel','1,3'],
  ['Berliner Volksbank eG, Filiale Kurt-Schumacher-<br>Platz','3,3'],['Berliner Volksbank eG, Filiale Leopoldplatz','6,0'],
  ['Berliner Volksbank eG, FinanzCenter Pankow','6,9'],['Berliner Volksbank eG, Filiale Moabit','7,5']
].map(r => `<li class="d-flex"><span class="plus"><svg width="20" height="20"><path d="M4 10h12M10 4v12" stroke="#fff" stroke-width="2.400"/></svg></span><a href="#" class="flex-grow-1 text-nowrap">${r[0]}</a><span class="km">${r[1]} km</span></li>`).join('');

// Road shields: type, number, centre x, centre y
document.getElementById('shields').innerHTML = [
  ['b','111',638.5,509],['b','111',658,651],['b','100',640.5,677],['b','114',878.500,478],['b','10',1028.500,472],['b','100',852.500,838],['b','103',726.500,817],['b','113',922.500,880],['b','5',563,843],
  ['y','96',684.5,461],['y','96',726.500,545],['y','96a',813,536],['y','2',991,496],['y','158',1091,533],['y','109',851,580],['y','96a',865,666],['y','96',768.500,697],['y','2',748,711],['y','1',987,723],['y','96a',905,779],['y','96a',934,811],['y','1',661,873],['y','96',793,896],['y','101',777.500,908],['y','101',745,974]
].map(([t,n,x,y]) => {
  const w = (t=='b'?9:6) + n.length*4.9;
  return t=='b'
    ? `<path fill="#3b77c5" d="M${x-w/2} ${y-4.500}l3-1.500h${w-6}l3 1.500v9l-3 1.500h${6-w}l-3-1.500z"/><text x="${x}" y="${y+3}" fill="#fff" letter-spacing=".4">${n}</text>`
    : `<rect x="${x-w/2}" y="${y-5.500}" width="${w}" height="11" fill="#ffdd33" stroke="#d9b81c" stroke-width=".9"/><text x="${x}" y="${y+3}" fill="#444">${n}</text>`;
}).join('');

// District names: text, x, baseline y, width
document.getElementById('labels').innerHTML = [
  ['EN',560,481,10],['TEGEL',609,532,26],['BEZIRK',621,556,29],['REINICKENDORF',602,565,67],['REINICKENDORF',695.5,572,67],['WEDDING',701,616,40],['HORST',560,644,29],['MITTE',772,677,25],['MOABIT',720,674,28],
  ['CHARLOTTENBURG',634,710,76],['BEZIRK',592,732,28],['LOTTENBURG-WILMERSDORF',560,742,118],['ALD',560,778,15],['SCHÖNEBERG',713,775,57],['KREUZBERG',774,753,49],['DAHLEM',608,858,36],['STEGLITZ',692,854,40],['TEMPELHOF',772,851,51],
  ['ZEHLENDORF',577,908,55],['LICHTERFELDE',645,919,60],['MARIENFELDE',745.5,963,58.500],['WEISSENSEE',874,623,53],['PRENZLAUER',841.5,647,55],['BERG',857,656,22],['KAROW',915.500,482,31],['BEZIRK PANKOW',821.5,528,70],
  ['MARZAHN',1006.500,648,43.500],['HELLERSDORF',1079,664,56],['BEZIRK',1052.500,691,29],['MARZAHN-HELLERSDORF',1014.5,700,107],['BEZIRK',941.500,665,29],['LICHTENBERG',926.500,674,58.500],['FRIEDRICHSHAIN',854.500,712,66],['BIESDORF',1027,730,41],
  ['RUMMELSBURG',901.500,753,65],['KARLSHORST',972.500,792,55],['BEZIRK',860.500,887,29.500],['NEUKÖLLN',852.500,896,44.500],['ADLERSHOF',992,906,50],['BUCKOW',849,935,37],['RUDOW',944,946,31],['PENICK',1100,897,32],['EPTOW',1099,944,28]
].map(([t,x,y,w]) => `<text x="${x}" y="${y}" textLength="${w}">${t}</text>`).join('');

// Branch pins: top left corner of each bubble
document.getElementById('pins').innerHTML = [
  [643,533],[632,513],[697,574],[739,615],[801,562],[821,597],[873,612],[1043,558],[707,668],[782,668],[606,696],[899,692],
  [664,712],[683,722],[718,725],[647,733],[683,759],[781,745],[836,755],[849,769],[929,805],[779,813],[681,834],[779,859],[695,899]
].map(([x,y]) => `<g style="filter:drop-shadow(0 1px 1px rgba(0,0,0,.45))"><path fill="#fff" d="M${x+4} ${y}h31q4 0 4 4v25q0 4-4 4h-11l-5 4.500-5-4.500h-10q-4 0-4-4v-25q0-4 4-4z"/></g><use href="#vr" x="${x+4.7}" y="${y+7}" width="29.300" height="19.500"/>`).join('');
</script>
</body>
</html>
